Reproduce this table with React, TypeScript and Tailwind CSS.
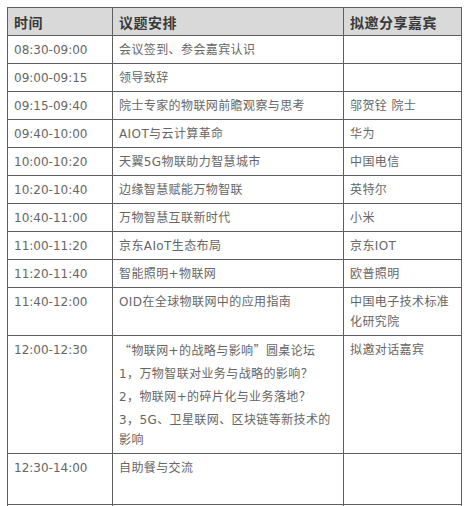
const rows: { time: string; topic: React.ReactNode; guest?: string; h?: string }[] = [
  { time: '08:30-09:00', topic: '会议签到、参会嘉宾认识' },
  { time: '09:00-09:15', topic: '领导致辞' },
  { time: '09:15-09:40', topic: '院士专家的物联网前瞻观察与思考', guest: '邬贺铨 院士' },
  { time: '09:40-10:00', topic: 'AIOT与云计算革命', guest: '华为' },
  { time: '10:00-10:20', topic: '天翼5G物联助力智慧城市', guest: '中国电信' },
  { time: '10:20-10:40', topic: '边缘智慧赋能万物智联', guest: '英特尔' },
  { time: '10:40-11:00', topic: '万物智慧互联新时代', guest: '小米' },
  { time: '11:00-11:20', topic: '京东AIoT生态布局', guest: '京东IOT' },
  { time: '11:20-11:40', topic: '智能照明+物联网', guest: '欧普照明' },
  { time: '11:40-12:00', topic: 'OID在全球物联网中的应用指南', guest: '中国电子技术标准化研究院' },
  {
    time: '12:00-12:30',
    topic: (
      <>
        <p className="mb-[3px]">
          <span className="font-['Noto_Sans_CJK_SC']">“</span>物联网+的战略与影响<span className="font-['Noto_Sans_CJK_SC']">”</span>圆桌论坛
        </p>
        <p className="mb-[3px]">1，万物智联对业务与战略的影响？</p>
        <p className="mb-[3px]">2，物联网+的碎片化与业务落地？</p>
        <p>3，5G、卫星联网、区块链等新技术的影响</p>
      </>
    ),
    guest: '拟邀对话嘉宾',
  },
  { time: '12:30-14:00', topic: '自助餐与交流', h: 'h-[51px]' },
]

export default function App() {
  return (
    <div className="bg-white w-[469px] h-[506px] overflow-hidden pt-[7px] pl-[7px] font-['DejaVu_Sans','Noto_Sans_CJK_SC',sans-serif]">
      <table className="border-collapse table-fixed w-[454px] text-[12px] leading-[20px] tracking-[0.4px] text-[#666]">
        <colgroup>
          <col className="w-[105px]" />
          <col className="w-[231px]" />
          <col className="w-[118px]" />
        </colgroup>
        <thead>
          <tr className="h-[28px] bg-[#d9d9d9] text-[#3a3a3a] text-[14px] font-bold">
            <th className="border border-[#5f5f5f] px-[6px] text-left font-['Noto_Sans_CJK_SC'] tracking-[0.5px]">时间</th>
            <th className="border border-[#5f5f5f] px-[6px] text-left font-['Noto_Sans_CJK_SC'] tracking-[0.5px]">议题安排</th>
            <th className="border border-[#5f5f5f] px-[6px] text-left font-['Noto_Sans_CJK_SC'] tracking-[0.5px]">拟邀分享嘉宾</th>
          </tr>
        </thead>
        <tbody>
          {rows.map((r) => (
            <tr key={r.time} className={r.h ?? 'h-[28px]'}>
              <td className="border border-[#5f5f5f] px-[6px] pt-[4px] pb-[3px] align-top tracking-normal">{r.time}</td>
              <td className="border border-[#5f5f5f] px-[6px] pt-[4px] pb-[3px] align-top">{r.topic}</td>
              <td className="border border-[#5f5f5f] px-[6px] pt-[4px] pb-[3px] align-top">{r.guest}</td>
            </tr>
          ))}
          <tr className="h-[28px]">
            <td className="border border-[#5f5f5f]" />
            <td className="border border-[#5f5f5f]" />
            <td className="border border-[#5f5f5f]" />
          </tr>
        </tbody>
      </table>
    </div>
  )
}
